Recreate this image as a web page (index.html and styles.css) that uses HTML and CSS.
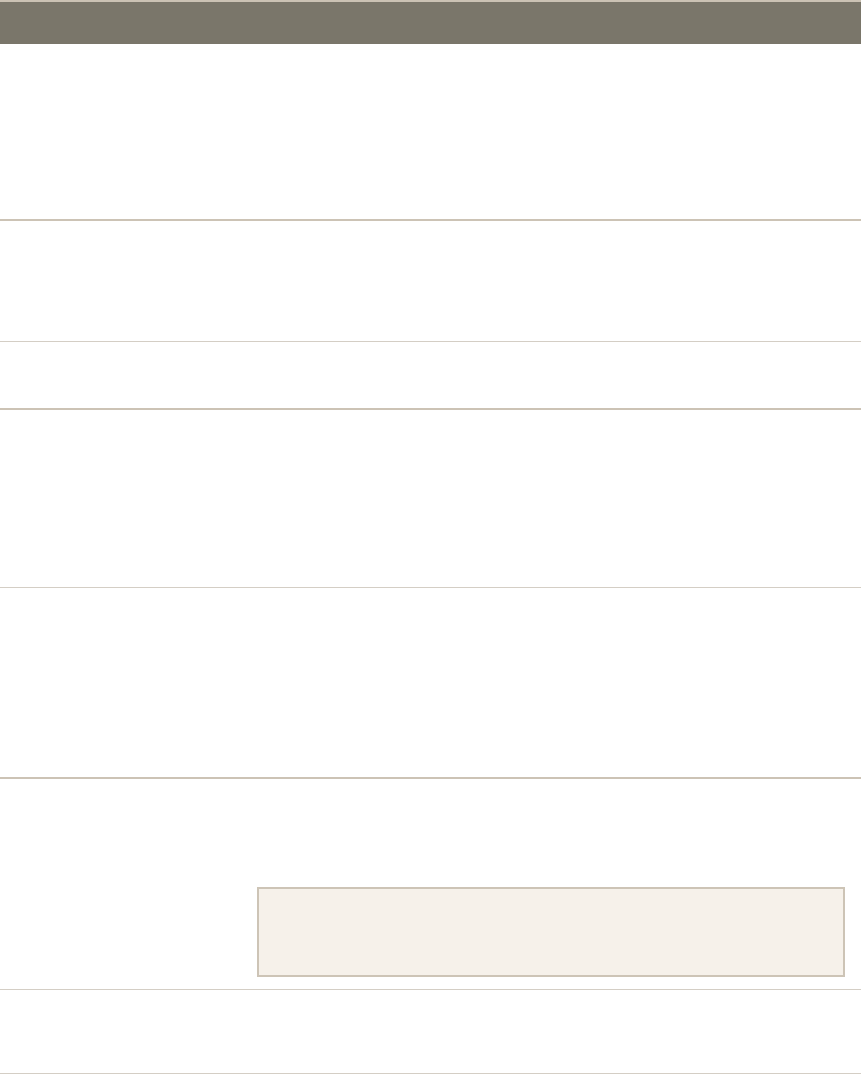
FILE: index.html
```html
<!DOCTYPE html>
<html lang="en">
<head>
<meta charset="utf-8">
<title>Table</title>
<link rel="stylesheet" href="styles.css">
</head>
<body>
<div class="sheet">
  <div class="head"></div>
  <div class="row row-1 thick"></div>
  <div class="row row-2 thin"></div>
  <div class="row row-3 thick"></div>
  <div class="row row-4 thin"></div>
  <div class="row row-5 thick"></div>
  <div class="row row-6 thin">
    <div class="label"></div>
    <div class="value">
      <div class="note"></div>
    </div>
  </div>
  <div class="row row-7 thin"></div>
</div>
</body>
</html>
```
FILE: styles.css
```css
html, body {
  margin: 0;
  padding: 0;
  background: #ffffff;
  font-family: "Liberation Sans", Arial, sans-serif;
}
.sheet {
  width: 861px;
  display: flex;
  flex-direction: column;
}
.head {
  height: 42px;
  border-top: 2px solid #cbc2b4;
  background: #7a766a;
}
.row {
  display: grid;
  grid-template-columns: 257px 1fr;
}
.thick { border-bottom: 2px solid #ccc3b5; }
.thin { border-bottom: 1px solid #d4cec5; }
.row-1 { height: 175px; }
.row-2 { height: 120px; }
.row-3 { height: 66px; }
.row-4 { height: 177px; }
.row-5 { height: 189px; }
.row-6 { height: 210px; }
.row-7 { height: 83px; }
.value {
  padding: 108px 16px 12px 0;
}
.note {
  height: 86px;
  background: #f6f1ea;
  border: 2px solid #cdc4b6;
}
```
